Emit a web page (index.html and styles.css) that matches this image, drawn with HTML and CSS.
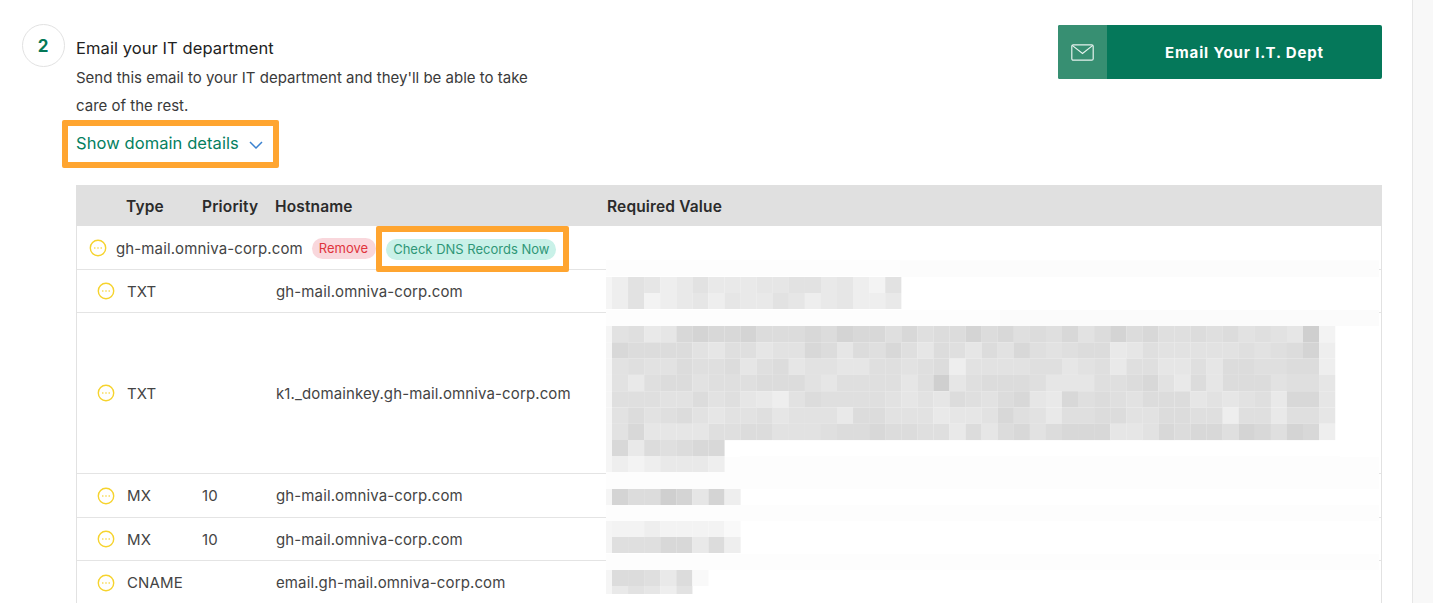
FILE: index.html
```html
<!DOCTYPE html>
<html lang="en">
<head>
<meta charset="utf-8">
<title>Email your IT department</title>
<link rel="stylesheet" href="styles.css">
</head>
<body>
<div class="page">
  <main class="main">
    <section class="step">
      <div class="step-num">2</div>
      <div class="step-text">
        <h2 class="step-title">Email your IT department</h2>
        <p class="step-desc">Send this email to your IT department and they'll be able to take care of the rest.</p>
        <a class="details-link" href="#"><span class="details-label">Show domain details</span>
          <svg class="chevron" width="14" height="8" viewBox="0 0 14 8"><path d="M1 1l6 6 6-6" fill="none" stroke="#3b82d0" stroke-width="1.5"/></svg>
        </a>
      </div>
      <a class="email-btn" href="#">
        <span class="email-btn-icon">
          <svg width="23" height="17" viewBox="0 0 23 17" fill="none" stroke="#e6f2ee" stroke-width="1.2"><rect x="0.8" y="0.8" width="21.4" height="15.4" rx="1.5"/><path d="M1.2 1.4l10.3 8 10.3-8"/></svg>
        </span>
        <span class="email-btn-label">Email Your I.T. Dept</span>
      </a>
    </section>

    <section class="dns">
      <div class="dns-head">
        <span class="c-type">Type</span>
        <span class="c-pri">Priority</span>
        <span class="c-host">Hostname</span>
        <span class="c-val">Required Value</span>
      </div>
      <div class="dns-domain">
        <svg class="dot-icon" viewBox="0 0 18 18"><use href="#pending"/></svg>
        <span class="domain-name">gh-mail.omniva-corp.com</span>
        <span class="pill pill-red">Remove</span>
        <span class="pill-box"><span class="pill pill-green">Check DNS Records Now</span></span>
      </div>
      <div class="dns-row h43">
        <span class="c-icon"><svg class="dot-icon" viewBox="0 0 18 18"><use href="#pending"/></svg></span>
        <span class="c-type">TXT</span><span class="c-pri"></span><span class="c-host">gh-mail.omniva-corp.com</span>
      </div>
      <div class="dns-row h161">
        <span class="c-icon"><svg class="dot-icon" viewBox="0 0 18 18"><use href="#pending"/></svg></span>
        <span class="c-type">TXT</span><span class="c-pri"></span><span class="c-host">k1._domainkey.gh-mail.omniva-corp.com</span>
      </div>
      <div class="dns-row h44">
        <span class="c-icon"><svg class="dot-icon" viewBox="0 0 18 18"><use href="#pending"/></svg></span>
        <span class="c-type">MX</span><span class="c-pri">10</span><span class="c-host">gh-mail.omniva-corp.com</span>
      </div>
      <div class="dns-row h43">
        <span class="c-icon"><svg class="dot-icon" viewBox="0 0 18 18"><use href="#pending"/></svg></span>
        <span class="c-type">MX</span><span class="c-pri">10</span><span class="c-host">gh-mail.omniva-corp.com</span>
      </div>
      <div class="dns-row h43 last">
        <span class="c-icon"><svg class="dot-icon" viewBox="0 0 18 18"><use href="#pending"/></svg></span>
        <span class="c-type">CNAME</span><span class="c-pri"></span><span class="c-host">email.gh-mail.omniva-corp.com</span>
      </div>
      <svg id="redacted" class="redacted" width="773" height="348" viewBox="606 255 773 348" aria-hidden="true"></svg>
    </section>
  </main>
  <aside class="rail"></aside>
</div>
<svg class="defs" width="0" height="0">
  <symbol id="pending" viewBox="0 0 18 18">
    <circle cx="9" cy="9" r="7.7" fill="none" stroke="#f6d32d" stroke-width="1.4"/>
    <circle cx="5.8" cy="9" r="0.8" fill="#f6d32d"/><circle cx="9" cy="9" r="0.8" fill="#f6d32d"/><circle cx="12.2" cy="9" r="0.8" fill="#f6d32d"/>
  </symbol>
</svg>
<script src="app.js"></script>
</body>
</html>
```
FILE: styles.css
```css
* { box-sizing: border-box; }
html, body { margin: 0; height: 603px; overflow: hidden; background: #fff; }
body { font-family: Inter, "Liberation Sans", sans-serif; color: #2b2b2b; }
.page { display: flex; height: 603px; }
.main { flex: 1; min-width: 0; padding: 23px 30px 0 22px; }
.rail { width: 21px; background: #f8f8f8; border-left: 1px solid #e6e6e6; }
.defs { position: absolute; }

.step { display: flex; align-items: flex-start; height: 162px; }
.step-num { width: 43px; height: 43px; margin-top: 1px; padding-right: 1px; flex: none; border: 1px solid #e2e2e2; border-radius: 50%; display: flex; align-items: center; justify-content: center; font-size: 17px; font-weight: 700; color: #047857; }
.step-text { margin-left: 11px; padding-top: 12px; width: 470px; }
.step-title { margin: 0; font-size: 16.5px; line-height: 26px; font-weight: 400; letter-spacing: 0.08px; color: #222; }
.step-desc { margin: 3px 0 0; font-size: 15px; line-height: 28px; color: #3a3a3a; width: 460px; }
.details-link { display: flex; align-items: center; gap: 10px; width: 217px; height: 48px; margin-left: -14px; padding: 0 0 2px 8px; border: 6px solid #ffa530; border-radius: 2px; font-size: 16.5px; letter-spacing: 0.08px; color: #047f5f; text-decoration: none; }
.chevron { margin-top: 3px; flex: none; }
.email-btn { margin-left: auto; margin-top: 2px; width: 324px; height: 54px; display: flex; background: #05785a; border-radius: 2px; overflow: hidden; text-decoration: none; }
.email-btn-icon { width: 49px; display: flex; align-items: center; justify-content: center; background: #378f72; }
.email-btn-label { flex: 1; display: flex; align-items: center; justify-content: center; color: #fff; font-size: 15px; font-weight: 700; letter-spacing: 0.85px; }

.dns { position: relative; margin-left: 54px; border-left: 1px solid #e2e2e2; border-right: 1px solid #e2e2e2; font-size: 15px; letter-spacing: 0.12px; color: #444; }
.dns-head { display: flex; align-items: center; height: 41px; margin-left: -1px; margin-right: -1px; padding: 1px 0 0 50px; background: #e0e0e0; font-weight: 600; color: #2b2b2b; font-size: 15.5px; letter-spacing: 0.15px; }
.dns-head .c-type { width: 76px; }
.dns-head .c-pri { width: 73px; }
.dns-head .c-host { width: 332px; }
.dns-domain { display: flex; align-items: center; height: 44px; border-bottom: 1px solid #e4e4e4; padding: 1px 0 0 12px; }
.domain-name { margin-left: 9px; }
.dns-row { display: flex; align-items: center; border-bottom: 1px solid #e4e4e4; }
.dns-row.last { border-bottom: 0; }
.h43 { height: 43px; }
.h44 { height: 44px; }
.h161 { height: 161px; }
.dot-icon { width: 18px; height: 18px; display: block; flex: none; }
.c-icon { width: 50px; padding-left: 20px; flex: none; }
.c-type { width: 75px; flex: none; }
.c-pri { width: 74px; flex: none; }
.c-host { flex: none; }
.pill { display: inline-flex; align-items: center; height: 21px; border-radius: 11px; font-size: 13px; letter-spacing: 0; padding: 0 7px; }
.pill-red { margin-left: 9px; padding: 0 8px 0 7px; background: #f9d7dc; color: #e0343c; }
.pill-box { display: flex; align-items: center; height: 46px; margin-top: 2px; padding: 0 7px 0 4px; border: 6px solid #ffa530; border-radius: 2px; background: #fff; }
.pill-green { background: #c9f1e8; color: #2f9777; }
.redacted { position: absolute; left: 529px; top: 70px; display: block; }
```
FILE: app.js
```js
var NS = 'http://www.w3.org/2000/svg';
var svg = document.getElementById('redacted');
var G = {0:'#cfcfcf',1:'#d4d4d4',2:'#d8d8d8',3:'#dcdcdc',4:'#dfdfdf',5:'#e2e2e2',6:'#e6e6e6',7:'#e9e9e9',8:'#eeeeee',9:'#f3f3f3',a:'#f9f9f9',b:'#fdfdfd'};
function rect(x, y, w, h, fill) {
  var r = document.createElementNS(NS, 'rect');
  r.setAttribute('x', x); r.setAttribute('y', y);
  r.setAttribute('width', w); r.setAttribute('height', h);
  r.setAttribute('fill', fill);
  svg.appendChild(r);
}
var CW = 16.07;
function block(y, h, row) {
  rect(606, y, 6, h, '#f5f5f5');
  for (var i = 0; i < row.length; i++) {
    rect(612 + i * CW, y, CW + 0.1, h, G[row[i]]);
  }
}
rect(606, 255, 773, 348, '#ffffff');
[[260,16],[310,16],[457,16],[473,16],[505,16],[554,16]].forEach(function (b) { rect(606, b[0], 773, b[1], '#fdfdfd'); });
rect(900, 261, 479, 16, '#fcfcfc');
rect(1000, 310, 379, 16, '#fbfbfb');
rect(740, 456, 600, 17, '#fdfdfd');
var data = [
  [277,16,'856875777665576895'],
  [293,16,'859876867756876887'],
  [326,16.3,'547621221333231224243313243425313244343545609'],
  [342.3,16.3,'233335644655236342463463524543376455555454318'],
  [358.6,16.3,'545534436436556644543855554465474466463344338'],
  [374.9,16.3,'574335444333564444640643334666443257363335446'],
  [391.2,16.3,'444553546785344445656345326724345333656547226'],
  [407.5,16.3,'535435655465557335557665245744335533448447446'],
  [423.8,16.3,'526666443355543323344736325322266523224124128'],
  [440,16,'2734322'],
  [456,16,'8987778'],
  [489,16,'13301618'],
  [521,16,'9989999a'],
  [537,16,'44422738'],
  [570,16,'33473a'],
  [586,8,'75685']
];
data.forEach(function (d) { block(d[0], d[1], d[2]); });
```
